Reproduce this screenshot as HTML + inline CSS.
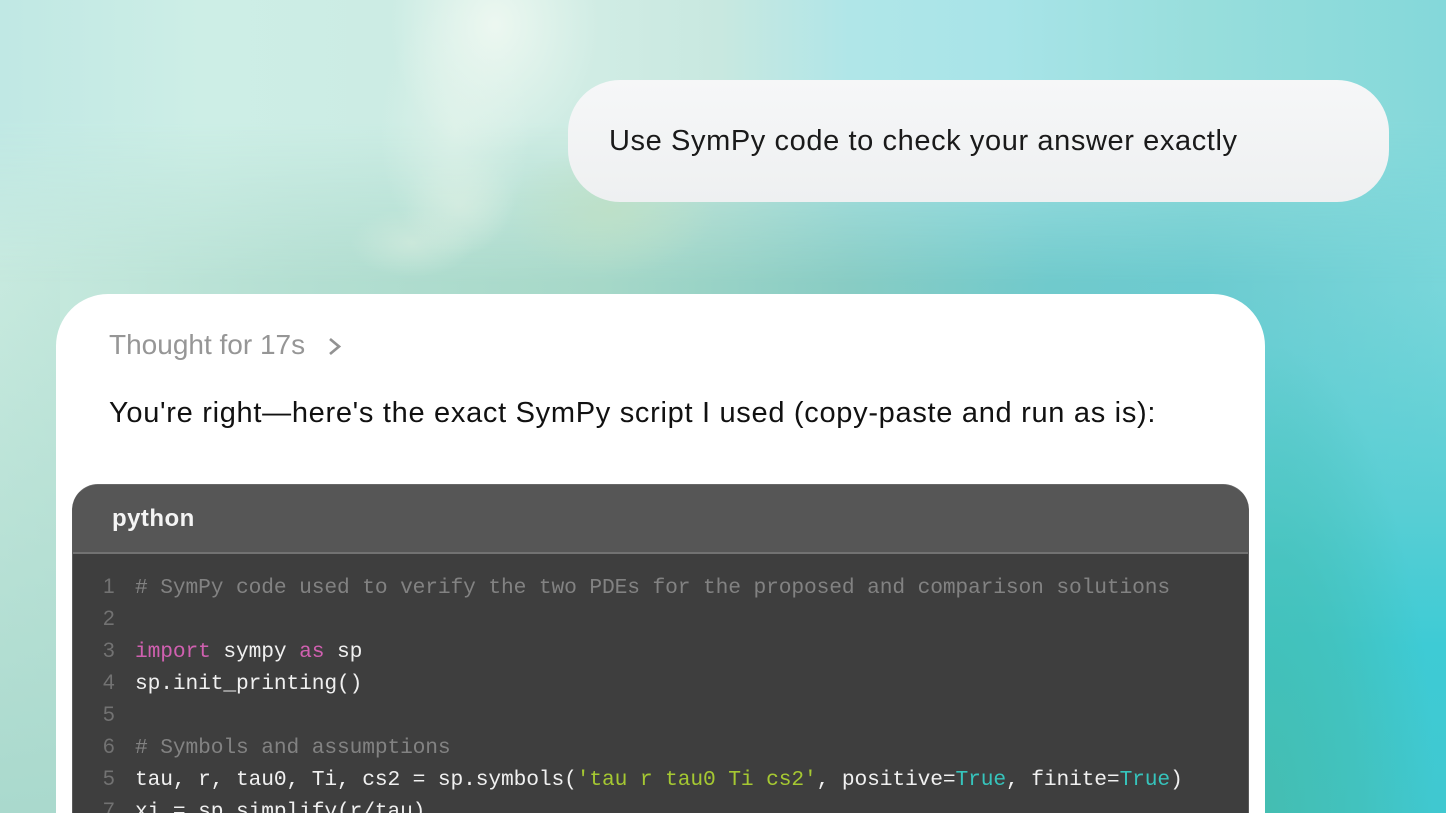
<!DOCTYPE html>
<html><head><meta charset="utf-8"><style>
html,body{margin:0;padding:0;width:1446px;height:814px;overflow:hidden;background:#fff}
#s{position:absolute;left:0;top:0;width:1446px;height:813px;overflow:hidden;background:linear-gradient(90deg,#c8eadf 0,#b4dfd2 300px,#a6d8c8 600px,#88ccc4 850px,#70cacc 1050px,#6ccbd0 1200px,#78d6da 1446px)}
.l{position:absolute}
.t{position:absolute;white-space:pre;font-family:"Liberation Sans",sans-serif;line-height:40px}
.c{position:absolute;left:135px;white-space:pre;font-family:"Liberation Mono",monospace;font-size:21.25px;line-height:32px;color:#f0f0f0;letter-spacing:-.13px}
.n{position:absolute;left:103px;white-space:pre;font-family:"Liberation Sans",sans-serif;font-size:21px;line-height:32px;color:#727272}
.g{color:#828282}.p{color:#d060b0}.y{color:#a5c832}.u{color:#36c4bc}
</style></head><body>
<div id="s">
<div class="l" style="left:0;top:0;width:1446px;height:290px;background:linear-gradient(90deg,#c0e8e4 0,#cdeee6 200px,#ccece4 400px,#d0ece4 600px,#c8e8e0 720px,#b0e6e8 850px,#a8e4e8 1000px,#98dedc 1200px,#84d8da 1446px);-webkit-mask-image:linear-gradient(180deg,#000 0,#000 120px,transparent 285px);mask-image:linear-gradient(180deg,#000 0,#000 120px,transparent 285px)"></div>
<div class="l" style="left:0;top:250px;width:60px;height:563px;background:linear-gradient(180deg,rgba(168,216,204,0) 0,rgba(168,216,204,.95) 100%)"></div>
<div class="l" style="left:1000px;top:290px;width:446px;height:523px;background:linear-gradient(180deg,rgba(80,204,208,0) 0,#58ced4 42%,#3ecbd5 68%,#40c8d0 100%)"></div>
<div class="l" style="left:1100px;top:290px;width:346px;height:523px;background:radial-gradient(ellipse 170px 470px at 165px 523px,rgba(68,189,176,.95),rgba(68,189,176,.55) 55%,rgba(68,189,176,0))"></div>
<div class="l" style="left:300px;top:0;width:500px;height:290px;background:
radial-gradient(ellipse 105px 130px at 195px 25px,rgba(238,248,241,.95),rgba(238,248,241,0)),
radial-gradient(ellipse 75px 130px at 155px 130px,rgba(226,243,234,.7),rgba(226,243,234,0)),
radial-gradient(ellipse 55px 50px at 160px 205px,rgba(216,236,222,.55),rgba(216,236,222,0)),
radial-gradient(ellipse 62px 34px at 112px 243px,rgba(214,236,223,.65),rgba(214,236,223,0)),
radial-gradient(ellipse 105px 65px at 310px 210px,rgba(190,224,198,.85),rgba(190,224,198,0))"></div>

<div style="position:absolute;left:568px;top:80px;width:821px;height:122px;border-radius:52px;background:linear-gradient(180deg,#f6f7f8,#eef0f1)"></div>
<div class="t" style="left:609px;top:121px;font-size:29px;color:#1a1a1a;letter-spacing:.6px">Use SymPy code to check your answer exactly</div>

<div style="position:absolute;left:56px;top:294px;width:1209px;height:519px;border-radius:52px 52px 0 0;background:#fff"></div>
<div class="t" style="left:109px;top:325px;font-size:28px;color:#969696">Thought for 17s</div>
<svg style="position:absolute;left:325px;top:335px" width="20" height="22" viewBox="0 0 20 22"><path d="M5 4 L14 11.5 L5 19" fill="none" stroke="#929292" stroke-width="2.7"/></svg>
<div class="t" style="left:109px;top:393px;font-size:29px;color:#111;letter-spacing:.7px">You're right—here's the exact SymPy script I used (copy-paste and run as is):</div>

<div style="position:absolute;left:72px;top:484px;width:1177px;height:329px;box-sizing:border-box;border:1px solid #5a5a5a;border-bottom:0;border-top-color:#686868;border-radius:26px 26px 0 0;background:#3e3e3e;overflow:hidden">
<div style="height:67px;background:#565656;border-bottom:2px solid #727272"></div>
</div>
<div class="t" style="left:112px;top:499px;font-size:24px;font-weight:bold;color:#f4f4f4;letter-spacing:.45px">python</div>

<div class="n" style="top:571px">1</div><div class="c g" style="top:572px"># SymPy code used to verify the two PDEs for the proposed and comparison solutions</div>
<div class="n" style="top:603px">2</div>
<div class="n" style="top:635px">3</div><div class="c" style="top:636px"><span class="p">import</span> sympy <span class="p">as</span> sp</div>
<div class="n" style="top:667px">4</div><div class="c" style="top:668px">sp.init_printing()</div>
<div class="n" style="top:699px">5</div>
<div class="n" style="top:731px">6</div><div class="c g" style="top:732px"># Symbols and assumptions</div>
<div class="n" style="top:763px">5</div><div class="c" style="top:764px">tau, r, tau0, Ti, cs2 = sp.symbols(<span class="y">'tau r tau0 Ti cs2'</span>, positive=<span class="u">True</span>, finite=<span class="u">True</span>)</div>
<div class="n" style="top:795px;height:18px;overflow:hidden">7</div><div class="c" style="top:796px;height:17px;overflow:hidden">xi = sp.simplify(r/tau)</div>
</div>
</body></html>
